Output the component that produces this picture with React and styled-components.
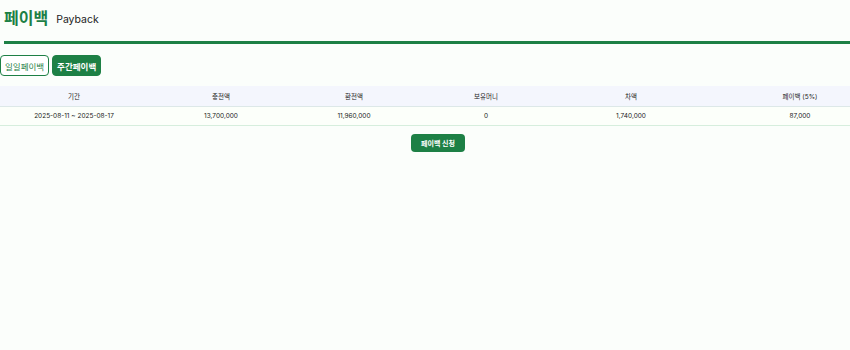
import React, { useState } from "react";
import styled, { createGlobalStyle } from "styled-components";

const GlobalStyle = createGlobalStyle`
  html, body {
    margin: 0;
    padding: 0;
    background: #fbfefb;
    font-family: Inter, "Noto Sans CJK KR", sans-serif;
  }
`;

const green = "#1d8045";

const Page = styled.div`
  width: 850px;
  min-height: 350px;
  background: #fbfefb;
  overflow: hidden;
`;

const Header = styled.div`
  display: flex;
  align-items: flex-end;
  gap: 8px;
  margin-left: 4px;
  padding: 8px 0 13px;
  border-bottom: 3px solid ${green};
`;

const Title = styled.h1`
  margin: 0;
  font-size: 16px;
  font-weight: 700;
  color: ${green};
  line-height: 20px;
`;

const SubTitle = styled.span`
  font-size: 10.5px;
  color: #222;
  line-height: 17px;
`;

const Tabs = styled.div`
  display: flex;
  gap: 3px;
  margin-top: 11px;
`;

const Tab = styled.button`
  height: 21px;
  padding: 0 4px;
  border-radius: 4px;
  font-family: inherit;
  font-size: 8.5px;
  cursor: pointer;
  border: 1px solid ${green};
  background: ${(p) => (p.active ? green : "#fff")};
  color: ${(p) => (p.active ? "#fff" : green)};
  font-weight: ${(p) => (p.active ? 600 : 400)};
`;

const TableWrap = styled.div`
  width: 850px;
  overflow: hidden;
  margin-top: 10px;
`;

const Table = styled.table`
  width: 896px;
  table-layout: fixed;
  border-collapse: collapse;
  font-size: 6.5px;
  color: #222;
`;

const Th = styled.th`
  background: #f4f6fd;
  font-weight: 400;
  height: 20px;
  padding: 0;
  border-bottom: 1px solid #dde8e8;
`;

const Td = styled.td`
  background: #fcfffa;
  text-align: center;
  height: 18px;
  padding: 0;
  border-bottom: 1px solid #d6eedd;
`;

const Actions = styled.div`
  display: flex;
  justify-content: center;
  margin-top: 8px;
`;

const ApplyButton = styled.button`
  height: 18px;
  padding: 0 10px;
  margin-left: 26px;
  border: none;
  border-radius: 4px;
  background: ${green};
  color: #fff;
  font-family: inherit;
  font-size: 7px;
  font-weight: 600;
`;

const widths = [148, 146, 120, 144, 146, 192];
const columns = ["기간", "충전액", "환전액", "보유머니", "차액", "페이백 (5%)"];
const rows = [["2025-08-11 ~ 2025-08-17", "13,700,000", "11,960,000", "0", "1,740,000", "87,000"]];

export default function App() {
  const [tab, setTab] = useState("weekly");
  return (
    <Page>
      <GlobalStyle />
      <Header>
        <Title>페이백</Title>
        <SubTitle>Payback</SubTitle>
      </Header>
      <Tabs>
        <Tab active={tab === "daily"} onClick={() => setTab("daily")}>일일페이백</Tab>
        <Tab active={tab === "weekly"} onClick={() => setTab("weekly")}>주간페이백</Tab>
      </Tabs>
      <TableWrap>
        <Table>
          <colgroup>
            {widths.map((w, i) => (
              <col key={i} style={{ width: w }} />
            ))}
          </colgroup>
          <thead>
            <tr>
              {columns.map((c) => (
                <Th key={c}>{c}</Th>
              ))}
            </tr>
          </thead>
          <tbody>
            {rows.map((r) => (
              <tr key={r[0]}>
                {r.map((v, i) => (
                  <Td key={i}>{v}</Td>
                ))}
              </tr>
            ))}
          </tbody>
        </Table>
      </TableWrap>
      <Actions>
        <ApplyButton>페이백 신청</ApplyButton>
      </Actions>
    </Page>
  );
}
